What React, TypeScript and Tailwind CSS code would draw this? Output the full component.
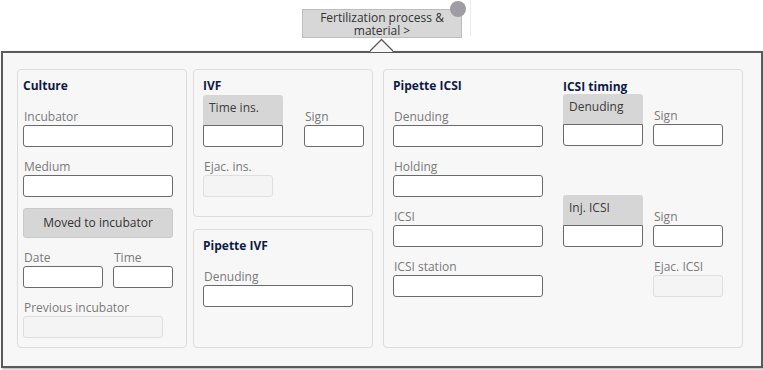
import type { ReactNode } from 'react'

const HEADING = 'block h-4 text-[12px] font-bold leading-4 text-[#0e1b47]'
const LABEL = 'block h-4 text-[12px] leading-4 text-[#7a7a7a]'

function Heading({ children, low }: { children: ReactNode; low?: boolean }) {
  return <div className={low ? HEADING + ' leading-[18px]' : HEADING}>{children}</div>
}

function Field({
  label,
  width,
  disabled,
  className,
}: {
  label: string
  width: string
  disabled?: boolean
  className?: string
}) {
  return (
    <div className={className}>
      <div className={LABEL + ' pl-[1px]'}>{label}</div>
      <input
        readOnly
        disabled={disabled}
        className={
          width +
          ' block h-[22px] rounded-[3px] border ' +
          (disabled ? 'border-[#dedede] bg-[#f4f4f4]' : 'border-[#6b6b6b] bg-white')
        }
      />
    </div>
  )
}

// gray caption box sitting on top of its input
function TimeBlock({ label }: { label: string }) {
  return (
    <div className="w-[80px]">
      <div className="h-[30px] rounded-t-[3px] bg-[#d6d6d6] pl-[6px] pt-[5px] text-[12px] leading-4 text-[#3b3b3b]">
        {label}
      </div>
      <input readOnly className="block h-[22px] w-[80px] rounded-b-[3px] border border-[#6b6b6b] bg-white" />
    </div>
  )
}

function Card({ className, children }: { className: string; children: ReactNode }) {
  return <div className={'rounded-[4px] border border-[#dcdcdc] bg-[#f7f7f7] ' + className}>{children}</div>
}

export default function App() {
  return (
    <div className="relative h-[370px] w-[763px] overflow-hidden bg-white font-['Open_Sans',sans-serif] text-[12px]">
      {/* faint outline of the page behind the popup */}
      <div className="absolute left-[470px] top-[-1px] h-[37px] w-[300px] border-l border-t border-[#ececec]" />

      <div className="flex pl-[302px] pt-[9px]">
        <div className="relative">
          <button className="flex h-[29px] w-[160px] flex-col items-center justify-center border border-[#bdbdbd] bg-[#d7d7d7] text-[12px] leading-[13px] text-[#333]">
            <span className="block">Fertilization process &amp;</span>
            <span className="block">material &gt;</span>
          </button>
          <span className="absolute left-[148px] top-[-8px] h-4 w-4 rounded-full bg-[#9f9ca4]" />
        </div>
      </div>

      <div className="relative ml-[1px] mt-[13px] h-[317px] w-[762px] border-2 border-[#5a5a5a] bg-[#f7f7f7] shadow-[1px_1px_2px_rgba(0,0,0,0.35)]">
        <svg className="absolute left-[367px] top-[-15px]" width="23" height="14" viewBox="0 0 23 14">
          <polygon points="0,14 11.5,2 23,14" fill="#f7f7f7" />
          <polyline points="0,13 11.5,1.5 23,13" fill="none" stroke="#5a5a5a" strokeWidth="1.3" />
        </svg>

        <div className="flex pl-[14px] pt-[16px]">
          {/* Culture */}
          <Card className="h-[279px] w-[170px] pl-[5px] pt-[8px]">
            <Heading>Culture</Heading>
            <Field label="Incubator" width="w-[150px]" className="mt-[15px]" />
            <Field label="Medium" width="w-[150px]" className="mt-3" />
            <button className="mt-[11px] block h-[30px] w-[150px] rounded-[3px] border border-[#cacaca] bg-[#d6d6d6] text-[12px] text-[#333]">
              Moved to incubator
            </button>
            <div className="mt-3 flex gap-[10px]">
              <Field label="Date" width="w-[80px]" />
              <Field label="Time" width="w-[60px]" />
            </div>
            <Field label="Previous incubator" width="w-[140px]" disabled className="mt-3" />
          </Card>

          <div className="ml-[6px] flex h-[279px] w-[180px] flex-col gap-3">
            <Card className="h-[148px] pl-[9px] pt-[8px]">
              <Heading>IVF</Heading>
              <div className="mt-[1px] flex items-end gap-[21px]">
                <TimeBlock label="Time ins." />
                <Field label="Sign" width="w-[60px]" />
              </div>
              <Field label="Ejac. ins." width="w-[70px]" disabled className="mt-3" />
            </Card>
            <Card className="flex-1 pl-[9px] pt-[8px]">
              <Heading>Pipette IVF</Heading>
              <Field label="Denuding" width="w-[150px]" className="mt-[15px]" />
            </Card>
          </div>

          <Card className="ml-[10px] flex h-[279px] w-[360px] gap-5 pl-[9px] pt-[8px]">
            <div>
              <Heading>Pipette ICSI</Heading>
              <Field label="Denuding" width="w-[150px]" className="mt-[15px]" />
              <Field label="Holding" width="w-[150px]" className="mt-3" />
              <Field label="ICSI" width="w-[150px]" className="mt-3" />
              <Field label="ICSI station" width="w-[150px]" className="mt-3" />
            </div>
            <div>
              <Heading low>ICSI timing</Heading>
              <div className="flex items-end gap-[10px]">
                <TimeBlock label="Denuding" />
                <Field label="Sign" width="w-[70px]" />
              </div>
              <div className="mt-[49px] flex items-end gap-[10px]">
                <TimeBlock label="Inj. ICSI" />
                <Field label="Sign" width="w-[70px]" />
              </div>
              <Field label="Ejac. ICSI" width="w-[70px]" disabled className="ml-[90px] mt-3" />
            </div>
          </Card>
        </div>
      </div>

      {/* tops of the page text peeking out below the popup */}
      <div className="flex text-[12px] leading-4 text-[#888]">
        <span className="ml-[52px]">Date</span>
        <span className="ml-[398px]">Name Date</span>
      </div>
    </div>
  )
}
